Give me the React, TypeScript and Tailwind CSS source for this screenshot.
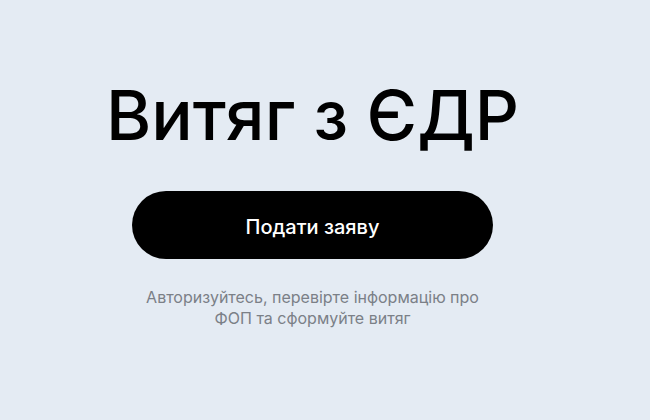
export default function App() {
  return (
    <div
      className="w-[650px] h-[420px] bg-[#e4ebf3] flex flex-col items-center pr-[25px] pt-[70px]"
      style={{ fontFamily: 'Inter, "Liberation Sans", sans-serif' }}
    >
      <h1 className="text-[69px] leading-[90px] text-black font-medium tracking-[0px]">
        Витяг з ЄДР
      </h1>
      <button className="mt-[31px] w-[361px] h-[68px] rounded-full bg-black text-white text-[20px] font-medium pt-[3px]">
        Подати заяву
      </button>
      <p className="mt-[28px] text-[16px] leading-[21px] text-[#7b8087] text-center">
        Авторизуйтесь, перевірте інформацію про
        <br />
        ФОП та сформуйте витяг
      </p>
    </div>
  );
}
